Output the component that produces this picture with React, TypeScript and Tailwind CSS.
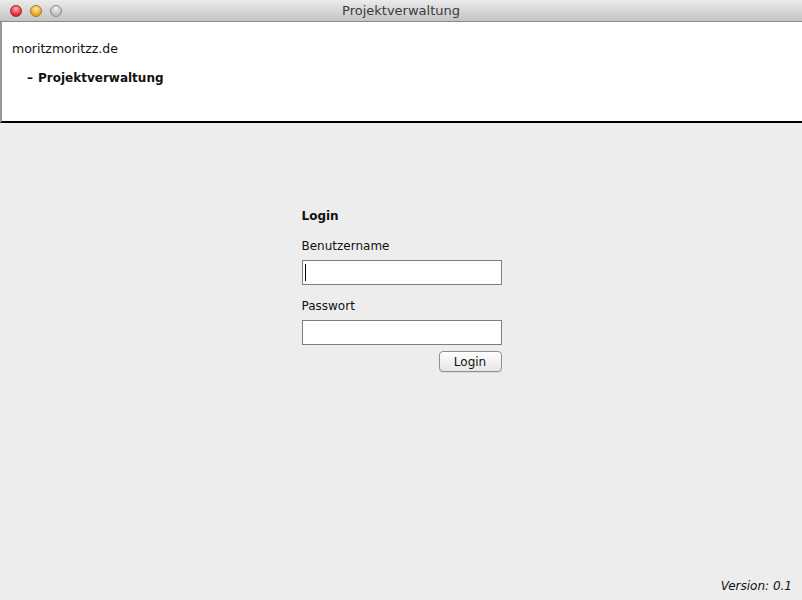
import React from 'react';

const font = { fontFamily: '"DejaVu Sans", "Lucida Grande", sans-serif' };

function TrafficLight({ from, to, edge }: { from: string; to: string; edge: string }) {
  return (
    <span
      className="block h-[12px] w-[12px] rounded-full border"
      style={{ background: `radial-gradient(circle at 50% 30%, ${from}, ${to} 70%)`, borderColor: edge }}
    />
  );
}

export default function App() {
  return (
    <div className="flex h-[600px] w-[802px] flex-col overflow-hidden bg-[#ededed] text-[#111]" style={font}>
      {/* title bar */}
      <div className="relative flex h-[22px] shrink-0 items-center border-b border-[#8a8a8a] bg-gradient-to-b from-[#ebebeb] to-[#c4c4c4] px-[10px]">
        <div className="flex gap-[8px]">
          <TrafficLight from="#ffb3b3" to="#e0242b" edge="#9c2a2a" />
          <TrafficLight from="#ffe9a6" to="#e9a315" edge="#a87a1a" />
          <TrafficLight from="#f4f4f4" to="#bcbcbc" edge="#8d8d8d" />
        </div>
        <div className="absolute inset-0 flex items-center justify-center text-[13px] text-[#3c3c3c]">
          Projektverwaltung
        </div>
      </div>

      {/* header panel */}
      <div className="flex h-[101px] shrink-0 flex-col border-b-2 border-l-2 border-b-black border-l-[#9a9a9a] bg-white pl-[10px] pt-[19px] text-[12px]">
        <div className="text-[12.5px] leading-[15px]">moritzmoritzz.de</div>
        <div className="mt-[15px] flex items-center gap-[5px] pl-[15px] font-bold leading-[15px]">
          <span>–</span>
          <span>Projektverwaltung</span>
        </div>
      </div>

      {/* login */}
      <div className="flex flex-1 flex-col">
        <div className="flex flex-1 justify-center pt-[86px]">
          <div className="ml-[1px] flex w-[200px] flex-col text-[12px]">
            <div className="font-bold leading-[15px]">Login</div>
            <div className="mt-[15px] leading-[15px]">Benutzername</div>
            <div className="mt-[6px] flex h-[25px] items-center border border-[#7d7d7d] bg-white pl-[2px]">
              <span className="block h-[17px] w-[1px] bg-black" />
            </div>
            <div className="mt-[14px] leading-[15px]">Passwort</div>
            <div className="mt-[6px] h-[25px] border border-[#7d7d7d] bg-white" />
            <div className="mt-[6px] flex justify-end">
              <button className="h-[21px] w-[63px] rounded-[4px] border border-[#8f8f8f] bg-gradient-to-b from-white to-[#e6e6e6] text-[12px] leading-none text-[#111] shadow-[0_1px_0_rgba(0,0,0,0.08)]">
                Login
              </button>
            </div>
          </div>
        </div>
        <div className="flex justify-end pb-[6px] pr-[10px] text-[12px] italic leading-[15px]">Version: 0.1</div>
      </div>
    </div>
  );
}
